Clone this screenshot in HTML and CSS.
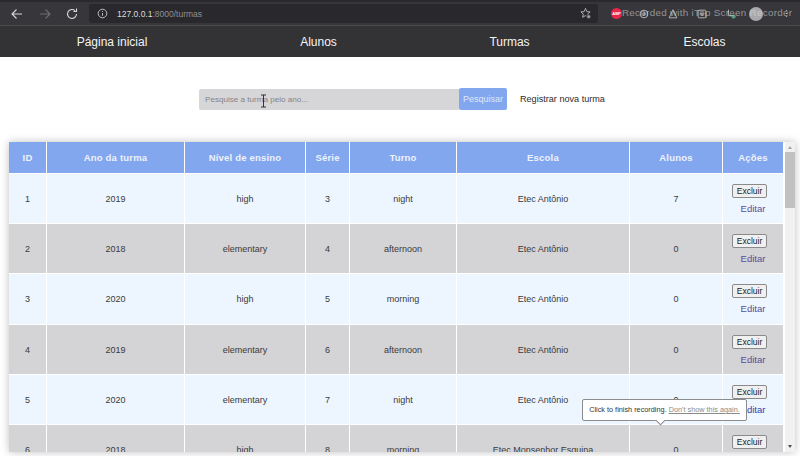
FILE: index.html
```html
<!DOCTYPE html>
<html lang="pt">

<head>
    <meta charset="UTF-8">
    <title>Turmas</title>
    <link rel="stylesheet" href="styles.css">
</head>

<body>
    <!-- barra do navegador -->
    <div class="browser-bar">
        <svg class="tool-icon" viewBox="0 0 14 14"><path d="M12 7H2M6.5 2.5 2 7l4.500 4.500" /></svg>
        <svg class="tool-icon dim" viewBox="0 0 14 14"><path d="M2 7h10M7.500 2.500 12 7l-4.500 4.500" /></svg>
        <svg class="tool-icon" viewBox="0 0 14 14"><path d="M11.500 7a4.500 4.500 0 1 1-1.400-3.300M11.500 1.500v3h-3" /></svg>
        <div class="url-box">
            <svg class="info-icon" viewBox="0 0 12 12"><circle cx="6" cy="6" r="4.700" /><path d="M6 5.500v3M6 3.300v1" /></svg>
            <span class="url-host">127.0.0.1</span><span class="url-path">:8000/turmas</span>
            <svg class="star-icon" viewBox="0 0 14 14"><path d="M7 1.500 8.500 5l3.500.3-2.700 2.300.8 3.500L7 9.300l-3.100 1.800.8-3.500L2 5.300 5.500 5z" /><circle class="star-gear" cx="10.500" cy="10.500" r="2.300" /></svg>
        </div>
        <div class="ext-icons">
            <span class="abp">ABP</span>
            <svg class="ext-icon" viewBox="0 0 14 14"><circle cx="7" cy="7" r="4.500" /><circle cx="7" cy="7" r="1.500" /></svg>
            <svg class="ext-icon" viewBox="0 0 14 14"><path d="M7 2 2.500 11.500h9z" /></svg>
            <svg class="ext-icon" viewBox="0 0 14 14"><rect x="2.500" y="2.500" width="9" height="9" rx="1.500" /><path d="M7 5v4M5 7h4" /></svg>
            <svg class="ext-icon" viewBox="0 0 14 14"><path d="M4 2v7h7" /><circle class="ext-dot" cx="10" cy="10" r="2.500" /></svg>
            <span class="avatar"></span>
            <span class="dots">⋮</span>
        </div>
        <span class="recorded">Recorded with iTop Screen Recorder</span>
    </div>

    <nav class="main-nav">
        <a href="#">Página inicial</a>
        <a href="#">Alunos</a>
        <a href="#">Turmas</a>
        <a href="#">Escolas</a>
    </nav>

    <div class="search-row">
        <form class="search-form">
            <input type="text" class="search-input" placeholder="Pesquise a turma pelo ano...">
            <button type="button" class="search-button">Pesquisar</button>
        </form>
        <a href="#" class="new-link">Registrar nova turma</a>
    </div>

    <div class="table-box">
        <div class="table-clip">
            <table class="class-table">
                <thead>
                    <tr>
                        <th class="col-id">ID</th>
                        <th class="col-year">Ano da turma</th>
                        <th class="col-level">Nível de ensino</th>
                        <th class="col-grade">Série</th>
                        <th class="col-shift">Turno</th>
                        <th class="col-school">Escola</th>
                        <th class="col-students">Alunos</th>
                        <th class="col-actions">Ações</th>
                    </tr>
                </thead>
                <tbody>
                    <tr>
                        <td>1</td><td>2019</td><td>high</td><td>3</td><td>night</td><td>Etec Antônio</td><td>7</td>
                        <td><button type="button" class="delete-button">Excluir</button><a href="#" class="edit-link">Editar</a></td>
                    </tr>
                    <tr>
                        <td>2</td><td>2018</td><td>elementary</td><td>4</td><td>afternoon</td><td>Etec Antônio</td><td>0</td>
                        <td><button type="button" class="delete-button">Excluir</button><a href="#" class="edit-link">Editar</a></td>
                    </tr>
                    <tr>
                        <td>3</td><td>2020</td><td>high</td><td>5</td><td>morning</td><td>Etec Antônio</td><td>0</td>
                        <td><button type="button" class="delete-button">Excluir</button><a href="#" class="edit-link">Editar</a></td>
                    </tr>
                    <tr>
                        <td>4</td><td>2019</td><td>elementary</td><td>6</td><td>afternoon</td><td>Etec Antônio</td><td>0</td>
                        <td><button type="button" class="delete-button">Excluir</button><a href="#" class="edit-link">Editar</a></td>
                    </tr>
                    <tr>
                        <td>5</td><td>2020</td><td>elementary</td><td>7</td><td>night</td><td>Etec Antônio</td><td>0</td>
                        <td><button type="button" class="delete-button">Excluir</button><a href="#" class="edit-link edit-blue">Editar</a></td>
                    </tr>
                    <tr>
                        <td>6</td><td>2018</td><td>high</td><td>8</td><td>morning</td><td>Etec Monsenhor Esquina</td><td>0</td>
                        <td><button type="button" class="delete-button">Excluir</button><a href="#" class="edit-link">Editar</a></td>
                    </tr>
                </tbody>
            </table>
        </div>
        <div class="scroll-track">
            <span class="arrow-up"></span>
            <span class="scroll-thumb"></span>
            <span class="arrow-down"></span>
        </div>
    </div>

    <!-- aviso do gravador -->
    <div class="rec-tip">Click to finish recording. <u>Don't show this again.</u></div>

    <svg class="text-cursor" viewBox="0 0 7 14"><path d="M1 1h5M1 13h5M3.500 1v12" /></svg>
</body>

</html>
```

FILE: styles.css
```css
body {
    margin: 0;
    padding: 0;
    height: 456px;
    overflow: hidden;
    background-color: #fff;
    font-family: "Liberation Sans", Arial, sans-serif;
    position: relative;
}

a {
    text-decoration: none;
}

/* barra do navegador */
.browser-bar {
    height: 26px;
    box-sizing: border-box;
    background-color: #37363a;
    border-top: 2px solid #2a2a2c;
    border-bottom: 1px solid #4b4b4d;
    display: flex;
    align-items: center;
    padding-left: 10px;
    position: relative;
}

.tool-icon {
    width: 14px;
    height: 14px;
    margin-right: 13.500px;
    fill: none;
    stroke: #d8d8d8;
    stroke-width: 1.100;
}

.tool-icon.dim {
    stroke: #6f6f72;
}

.url-box {
    width: 509px;
    height: 19px;
    margin-left: -3.500px;
    background-color: #29282c;
    border-radius: 3px;
    display: flex;
    align-items: center;
    padding-left: 8px;
    box-sizing: border-box;
    font-size: 8.500px;
    position: relative;
}

.info-icon {
    width: 11px;
    height: 11px;
    margin-right: 9px;
    fill: none;
    stroke: #c8c8c8;
    stroke-width: 1;
}

.url-host {
    color: #dcdcdc;
}

.url-path {
    color: #8f8f92;
}

.star-icon {
    position: absolute;
    right: 6px;
    top: 3px;
    width: 13px;
    height: 13px;
    fill: none;
    stroke: #b8b8b8;
    stroke-width: 1;
}

.star-gear {
    fill: #9a9a9c;
    stroke: #29282c;
}

.ext-icons {
    display: flex;
    align-items: center;
    margin-left: 13px;
}

.abp {
    width: 11px;
    height: 11px;
    border-radius: 50%;
    background-color: #e8274a;
    color: #fff;
    font-size: 4px;
    font-weight: bold;
    line-height: 11px;
    text-align: center;
    margin-right: 16px;
}

.ext-icon {
    width: 12px;
    height: 12px;
    margin-right: 17px;
    fill: none;
    stroke: #c4c4c4;
    stroke-width: 1;
}

.ext-dot {
    fill: #5d9b80;
    stroke: none;
}

.avatar {
    width: 14px;
    height: 14px;
    border-radius: 50%;
    background-color: #a9a8aa;
    margin-left: -5px;
}

.dots {
    color: #c8c8c8;
    font-size: 9px;
    margin-left: 19px;
}

.recorded {
    position: absolute;
    left: 622px;
    top: 5px;
    font-size: 9.800px;
    letter-spacing: .3px;
    color: rgba(225, 225, 225, .55);
    white-space: nowrap;
}

/* menu principal */
.main-nav {
    height: 31px;
    background-color: #333234;
    display: flex;
    align-items: center;
}

.main-nav a {
    flex-shrink: 0;
    color: #f4f4f4;
    font-size: 12px;
    text-align: center;
}

.main-nav a:nth-child(1) { width: 224px; }
.main-nav a:nth-child(2) { width: 189px; }
.main-nav a:nth-child(3) { width: 193px; }
.main-nav a:nth-child(4) { width: 197px; }

/* busca */
.search-row {
    display: flex;
    align-items: center;
    padding: 31px 0 0 199px;
    height: 22px;
}

.search-form {
    display: flex;
}

.search-input {
    width: 260px;
    height: 21px;
    box-sizing: border-box;
    border: none;
    outline: none;
    background-color: #d6d5d7;
    border-radius: 2px 0 0 2px;
    padding: 0 6px;
    font-family: inherit;
    font-size: 8.100px;
}

.search-input::placeholder {
    color: #85858a;
}

.search-button {
    width: 48px;
    height: 22px;
    margin-top: -1px;
    padding: 0;
    border: none;
    border-radius: 2px;
    background-color: #82a7ef;
    color: #dfe7f8;
    font-family: inherit;
    font-size: 9px;
}

.new-link {
    margin-left: 13px;
    color: #2c2c2e;
    font-size: 9.100px;
}

/* tabela */
.table-box {
    width: 786px;
    height: 310px;
    margin: 32px 0 0 9px;
    display: flex;
    box-shadow: 0 0 8px rgba(0, 0, 0, .25);
}

.table-clip {
    width: 776px;
    height: 310px;
    overflow: hidden;
    background-color: #fff;
}

.class-table {
    width: 775px;
    table-layout: fixed;
    border-collapse: separate;
    border-spacing: 0;
    font-size: 9px;
    color: #3a3a3d;
}

.class-table th {
    height: 30px;
    padding: 0 0 1px;
    background-color: #82a7ef;
    color: #eef2fb;
    font-size: 9.500px;
    font-weight: bold;
    letter-spacing: .2px;
    border-right: 1px solid #fff;
    border-bottom: 1px solid #fff;
}

.class-table td {
    height: 50.200px;
    padding: 1px 0 0;
    box-sizing: border-box;
    text-align: center;
    border-right: 1px solid #fff;
    border-bottom: 1px solid #fff;
}

.class-table tbody tr:nth-child(odd) td {
    background-color: #edf6fe;
}

.class-table tbody tr:nth-child(even) td {
    background-color: #d4d3d5;
}

.col-id { width: 37px; }
.col-year { width: 137px; }
.col-level { width: 120px; }
.col-grade { width: 43px; }
.col-shift { width: 106px; }
.col-school { width: 172px; }
.col-students { width: 92px; }

.delete-button {
    display: block;
    width: 35px;
    height: 14px;
    margin: 0 0 5px 9px;
    padding: 0;
    box-sizing: border-box;
    border: 1px solid #8a8a8c;
    border-radius: 2px;
    background-color: #f0f0f0;
    color: #222;
    font-family: inherit;
    font-size: 8.500px;
}

.edit-link {
    display: block;
    color: #5a4d9a;
    font-size: 9.500px;
}

.edit-blue {
    color: #2f3fb0;
}

.scroll-track {
    width: 10px;
    height: 310px;
    background-color: #f1f1f1;
    position: relative;
}

.scroll-thumb {
    position: absolute;
    left: 0;
    top: 10px;
    width: 10px;
    height: 56px;
    background-color: #c1c1c1;
}

.arrow-up, .arrow-down {
    position: absolute;
    left: 3px;
    width: 0;
    height: 0;
    border-left: 2px solid transparent;
    border-right: 2px solid transparent;
}

.arrow-up {
    top: 4px;
    border-bottom: 3px solid #a5a5a5;
}

.arrow-down {
    bottom: 4px;
    border-top: 3px solid #505050;
}

/* aviso sobre a tabela */
.rec-tip {
    position: absolute;
    left: 582px;
    top: 399px;
    width: 165px;
    height: 22px;
    box-sizing: border-box;
    background-color: #fff;
    border: 1px solid #8c8c8c;
    border-radius: 2px;
    color: #333;
    font-size: 7.300px;
    line-height: 20px;
    text-align: center;
    white-space: nowrap;
}

.rec-tip u {
    color: #8a8a8a;
}

.rec-tip::after {
    content: "";
    position: absolute;
    left: 74px;
    bottom: -4px;
    width: 6px;
    height: 6px;
    background-color: #fff;
    border-right: 1px solid #8c8c8c;
    border-bottom: 1px solid #8c8c8c;
    transform: rotate(45deg);
}

.text-cursor {
    position: absolute;
    left: 260px;
    top: 94px;
    width: 7px;
    height: 14px;
    fill: none;
    stroke: #333;
    stroke-width: 1;
}
```
